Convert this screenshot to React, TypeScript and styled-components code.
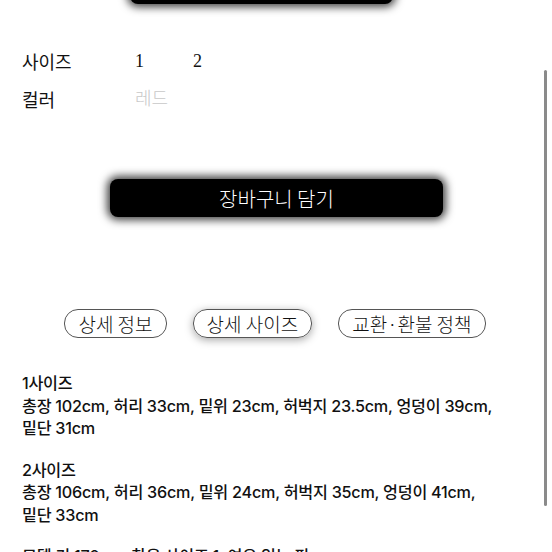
import React from 'react'
import styled, { createGlobalStyle } from 'styled-components'

const GlobalStyle = createGlobalStyle`
  html, body {
    margin: 0;
    padding: 0;
    background: #fff;
  }
  body {
    font-family: "Liberation Serif", "Noto Sans CJK KR", serif;
    color: #111;
  }
`

const Page = styled.div`
  position: relative;
  width: 552px;
  height: 552px;
  overflow: hidden;
  background: #fff;
`

const Content = styled.div`
  display: flex;
  flex-direction: column;
  margin-top: -34px;
`

const BlackButton = styled.button<{ $left: number; $width: number }>`
  align-self: flex-start;
  margin-left: ${(p) => p.$left}px;
  width: ${(p) => p.$width}px;
  height: 38px;
  padding: 0;
  border: none;
  border-radius: 8px;
  background: #000;
  color: #fff;
  font-family: "Noto Sans CJK KR", sans-serif;
  font-size: 20px;
  font-weight: 300;
  box-shadow: 0 0 9px 3px rgba(0, 0, 0, 0.75);
  cursor: pointer;
`

const Options = styled.div`
  display: flex;
  flex-direction: column;
  gap: 15px;
  padding: 46px 0 0 22px;
`

const OptionRow = styled.div`
  display: flex;
  align-items: center;
  font-size: 18px;
  line-height: 23px;
`

const OptionLabel = styled.span`
  width: 113px;
  font-family: "Noto Sans CJK KR", sans-serif;
  font-weight: 400;
`

const OptionValue = styled.span<{ $muted?: boolean }>`
  margin-right: 49px;
  color: ${(p) => (p.$muted ? '#c8c8c8' : '#111')};
  font-weight: ${(p) => (p.$muted ? 300 : 400)};
`

const CartWrap = styled.div`
  padding-top: 68px;
`

const Tabs = styled.div`
  display: flex;
  justify-content: center;
  gap: 26px;
  margin-top: 92px;
  padding-right: 2px;
`

const Tab = styled.div<{ $active?: boolean }>`
  height: 27px;
  padding: 0 13px;
  display: flex;
  align-items: center;
  border: 1px solid #555;
  border-radius: 14px;
  font-family: "Noto Sans CJK KR", sans-serif;
  font-size: 19px;
  font-weight: 300;
  color: #111;
  box-shadow: ${(p) => (p.$active ? '0 2px 8px rgba(0, 0, 0, 0.35)' : 'none')};
`

const Details = styled.div`
  display: flex;
  flex-direction: column;
  gap: 19px;
  padding: 34px 20px 0 22px;
`

const SizeBlock = styled.p`
  margin: 0;
  font-family: "Inter", "Noto Sans CJK KR", sans-serif;
  font-size: 16.2px;
  font-weight: 500;
  line-height: 22.5px;
  color: #111;
  letter-spacing: -0.25px;
`

const Scrollbar = styled.div`
  position: absolute;
  top: 70px;
  right: 5px;
  width: 3px;
  height: 436px;
  border-radius: 2px;
  background: #8a8a8a;
`

export default function App() {
  return (
    <>
      <GlobalStyle />
      <Page>
        <Content>
          <BlackButton $left={130} $width={263} aria-label="바로 구매" />
          <Options>
            <OptionRow>
              <OptionLabel>사이즈</OptionLabel>
              <OptionValue>1</OptionValue>
              <OptionValue>2</OptionValue>
            </OptionRow>
            <OptionRow>
              <OptionLabel>컬러</OptionLabel>
              <OptionValue $muted>레드</OptionValue>
            </OptionRow>
          </Options>
          <CartWrap>
            <BlackButton $left={110} $width={333}>장바구니 담기</BlackButton>
          </CartWrap>
          <Tabs>
            <Tab>상세 정보</Tab>
            <Tab $active>상세 사이즈</Tab>
            <Tab>교환·환불 정책</Tab>
          </Tabs>
          <Details>
            <SizeBlock>
              1사이즈
              <br />
              총장 102cm, 허리 33cm, 밑위 23cm, 허벅지 23.5cm, 엉덩이 39cm,
              <br />
              밑단 31cm
            </SizeBlock>
            <SizeBlock>
              2사이즈
              <br />
              총장 106cm, 허리 36cm, 밑위 24cm, 허벅지 35cm, 엉덩이 41cm,
              <br />
              밑단 33cm
            </SizeBlock>
            <SizeBlock>모델 키 170cm, 착용 사이즈 1, 여유 있는 핏</SizeBlock>
          </Details>
        </Content>
        <Scrollbar />
      </Page>
    </>
  )
}
